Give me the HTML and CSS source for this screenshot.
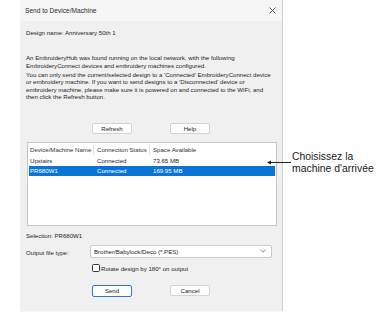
FILE: index.html
```html
<!DOCTYPE html>
<html>
<head>
<meta charset="utf-8">
<link rel="stylesheet" href="styles.css">
</head>
<body>
<div class="stage">
  <div class="dialog">
    <div class="titlebar">
      <span class="title">Send to Device/Machine</span>
      <svg class="close" width="7" height="7" viewBox="0 0 7 7"><path d="M0.5 0.5 L6.5 6.5 M6.5 0.5 L0.5 6.5" stroke="#444" stroke-width="0.9" fill="none"/></svg>
    </div>
    <div class="content">
      <p class="design">Design name: Anniversary 50th 1</p>
      <p class="p1">An EmbroideryHub was found running on the local network, with the following EmbroideryConnect devices and embroidery machines configured.</p>
      <p class="p2">You can only send the current/selected design to a 'Connected' EmbroideryConnect device or embroidery machine. If you want to send designs to a 'Disconnected' device or embroidery machine, please make sure it is powered on and connected to the WiFi, and then click the Refresh button.</p>
      <div class="btnrow top">
        <button class="btn">Refresh</button>
        <button class="btn">Help</button>
      </div>
      <div class="list">
        <div class="row head">
          <span class="c1">Device/Machine Name</span>
          <span class="c2">Connection Status</span>
          <span class="c3">Space Available</span>
        </div>
        <div class="row">
          <span class="c1">Upstairs</span>
          <span class="c2">Connected</span>
          <span class="c3">73.65 MB</span>
        </div>
        <div class="row sel">
          <span class="c1">PR680W1</span>
          <span class="c2">Connected</span>
          <span class="c3">169.95 MB</span>
        </div>
      </div>
      <p class="selection">Selection: PR680W1</p>
      <div class="output">
        <span class="olabel">Output file type:</span>
        <div class="combo">
          <span>Brother/Babylock/Deco (*.PES)</span>
          <svg width="6" height="4" viewBox="0 0 6 4"><path d="M0.5 0.8 L3 3.2 L5.5 0.8" stroke="#777" stroke-width="0.8" fill="none"/></svg>
        </div>
      </div>
      <label class="check"><span class="box"></span><span>Rotate design by 180° on output</span></label>
      <div class="btnrow bottom">
        <button class="btn default">Send</button>
        <button class="btn">Cancel</button>
      </div>
    </div>
  </div>
  <div class="note">
    <svg class="arrow" width="24" height="5" viewBox="0 0 24 5"><path d="M24 2.5 L2 2.5" stroke="#222" stroke-width="1"/><path d="M0 2.5 L4 0.5 L4 4.5 Z" fill="#222"/></svg>
    <div class="notetext">Choisissez la<br>machine d'arrivée</div>
  </div>
</div>
</body>
</html>
```
FILE: styles.css
```css
* { box-sizing: border-box; }
html, body { margin: 0; padding: 0; background: #fff; }
body {
  font-family: "Liberation Sans", Arial, sans-serif;
  font-size: 6.1px;
  color: #1e1e1e;
}
.stage { position: relative; width: 391px; height: 326px; }
.dialog {
  margin-left: 20px;
  width: 262px;
  height: 311px;
  background: #f0f0f0;
  box-shadow: 1px 0 0 #cfcfcf, 0 1px 0 #f6f6f6;
  display: flex;
  flex-direction: column;
}
.titlebar {
  height: 21px;
  background: #f6f6f6;
  display: flex;
  align-items: center;
  justify-content: space-between;
  padding: 0 6px 0 5px;
}
.title { font-size: 6.6px; color: #2a2a2a; }
.content { padding: 0 5px 0 6px; }
p { margin: 0; }
.design { margin-top: 8px; line-height: 8px; }
.p1 { margin-top: 17px; line-height: 7.6px; padding-right: 30px; }
.p2 { margin-top: 1.5px; line-height: 7.5px; padding-right: 2px; }
.btnrow { display: flex; gap: 38px; padding-left: 66px; }
.btnrow.top { margin-top: 22px; }
.btn {
  width: 40px;
  height: 11px;
  padding: 0;
  font-family: inherit;
  font-size: 6.1px;
  color: #1e1e1e;
  background: #fdfdfd;
  border: 1px solid #d2d2d2;
  border-radius: 2px;
  line-height: 9px;
}
.btn.default { border: 1px solid #2a78c6; height: 12px; }
.list {
  margin-top: 8px;
  margin-left: 1px;
  width: 250px;
  height: 84px;
  background: #fff;
  border: 1px solid #c4c4c4;
  padding: 2px 1px 0 1px;
}
.row {
  display: grid;
  grid-template-columns: 64px 56px 1fr;
  height: 10px;
  line-height: 10px;
  white-space: nowrap;
}
.row span { padding-left: 1px; }
.row .c2, .row .c3 { padding-left: 4px; }
.head { margin-bottom: 1px; color: #333; }
.head .c2, .head .c3 { border-left: 1px solid #e2e2e2; padding-left: 3px; }
.sel { background: #0a74d6; color: #fff; }
.selection { margin-top: 6px; line-height: 8px; }
.output {
  margin-top: 9px;
  display: flex;
  align-items: flex-start;
}
.olabel { width: 64px; line-height: 8px; }
.combo {
  width: 182px;
  height: 13px;
  background: #fff;
  border: 1px solid #cacaca;
  border-radius: 2px;
  display: flex;
  align-items: center;
  justify-content: space-between;
  padding: 0 5px 0 3px;
  margin-top: -4px;
}
.check {
  display: flex;
  align-items: center;
  gap: 1px;
  margin-top: 6px;
  margin-left: 66px;
  height: 9px;
}
.box {
  width: 8px;
  height: 8px;
  border: 1px solid #333;
  border-radius: 1.5px;
  background: #fff;
}
.btnrow.bottom { margin-top: 12px; }
.note {
  position: absolute;
  left: 267px;
  top: 151px;
  display: flex;
  align-items: flex-start;
}
.arrow { margin-top: 9px; }
.notetext {
  margin-left: 1px;
  font-family: "Liberation Sans", Arial, sans-serif;
  font-size: 10.4px;
  line-height: 12px;
  color: #1a1a1a;
}
```
